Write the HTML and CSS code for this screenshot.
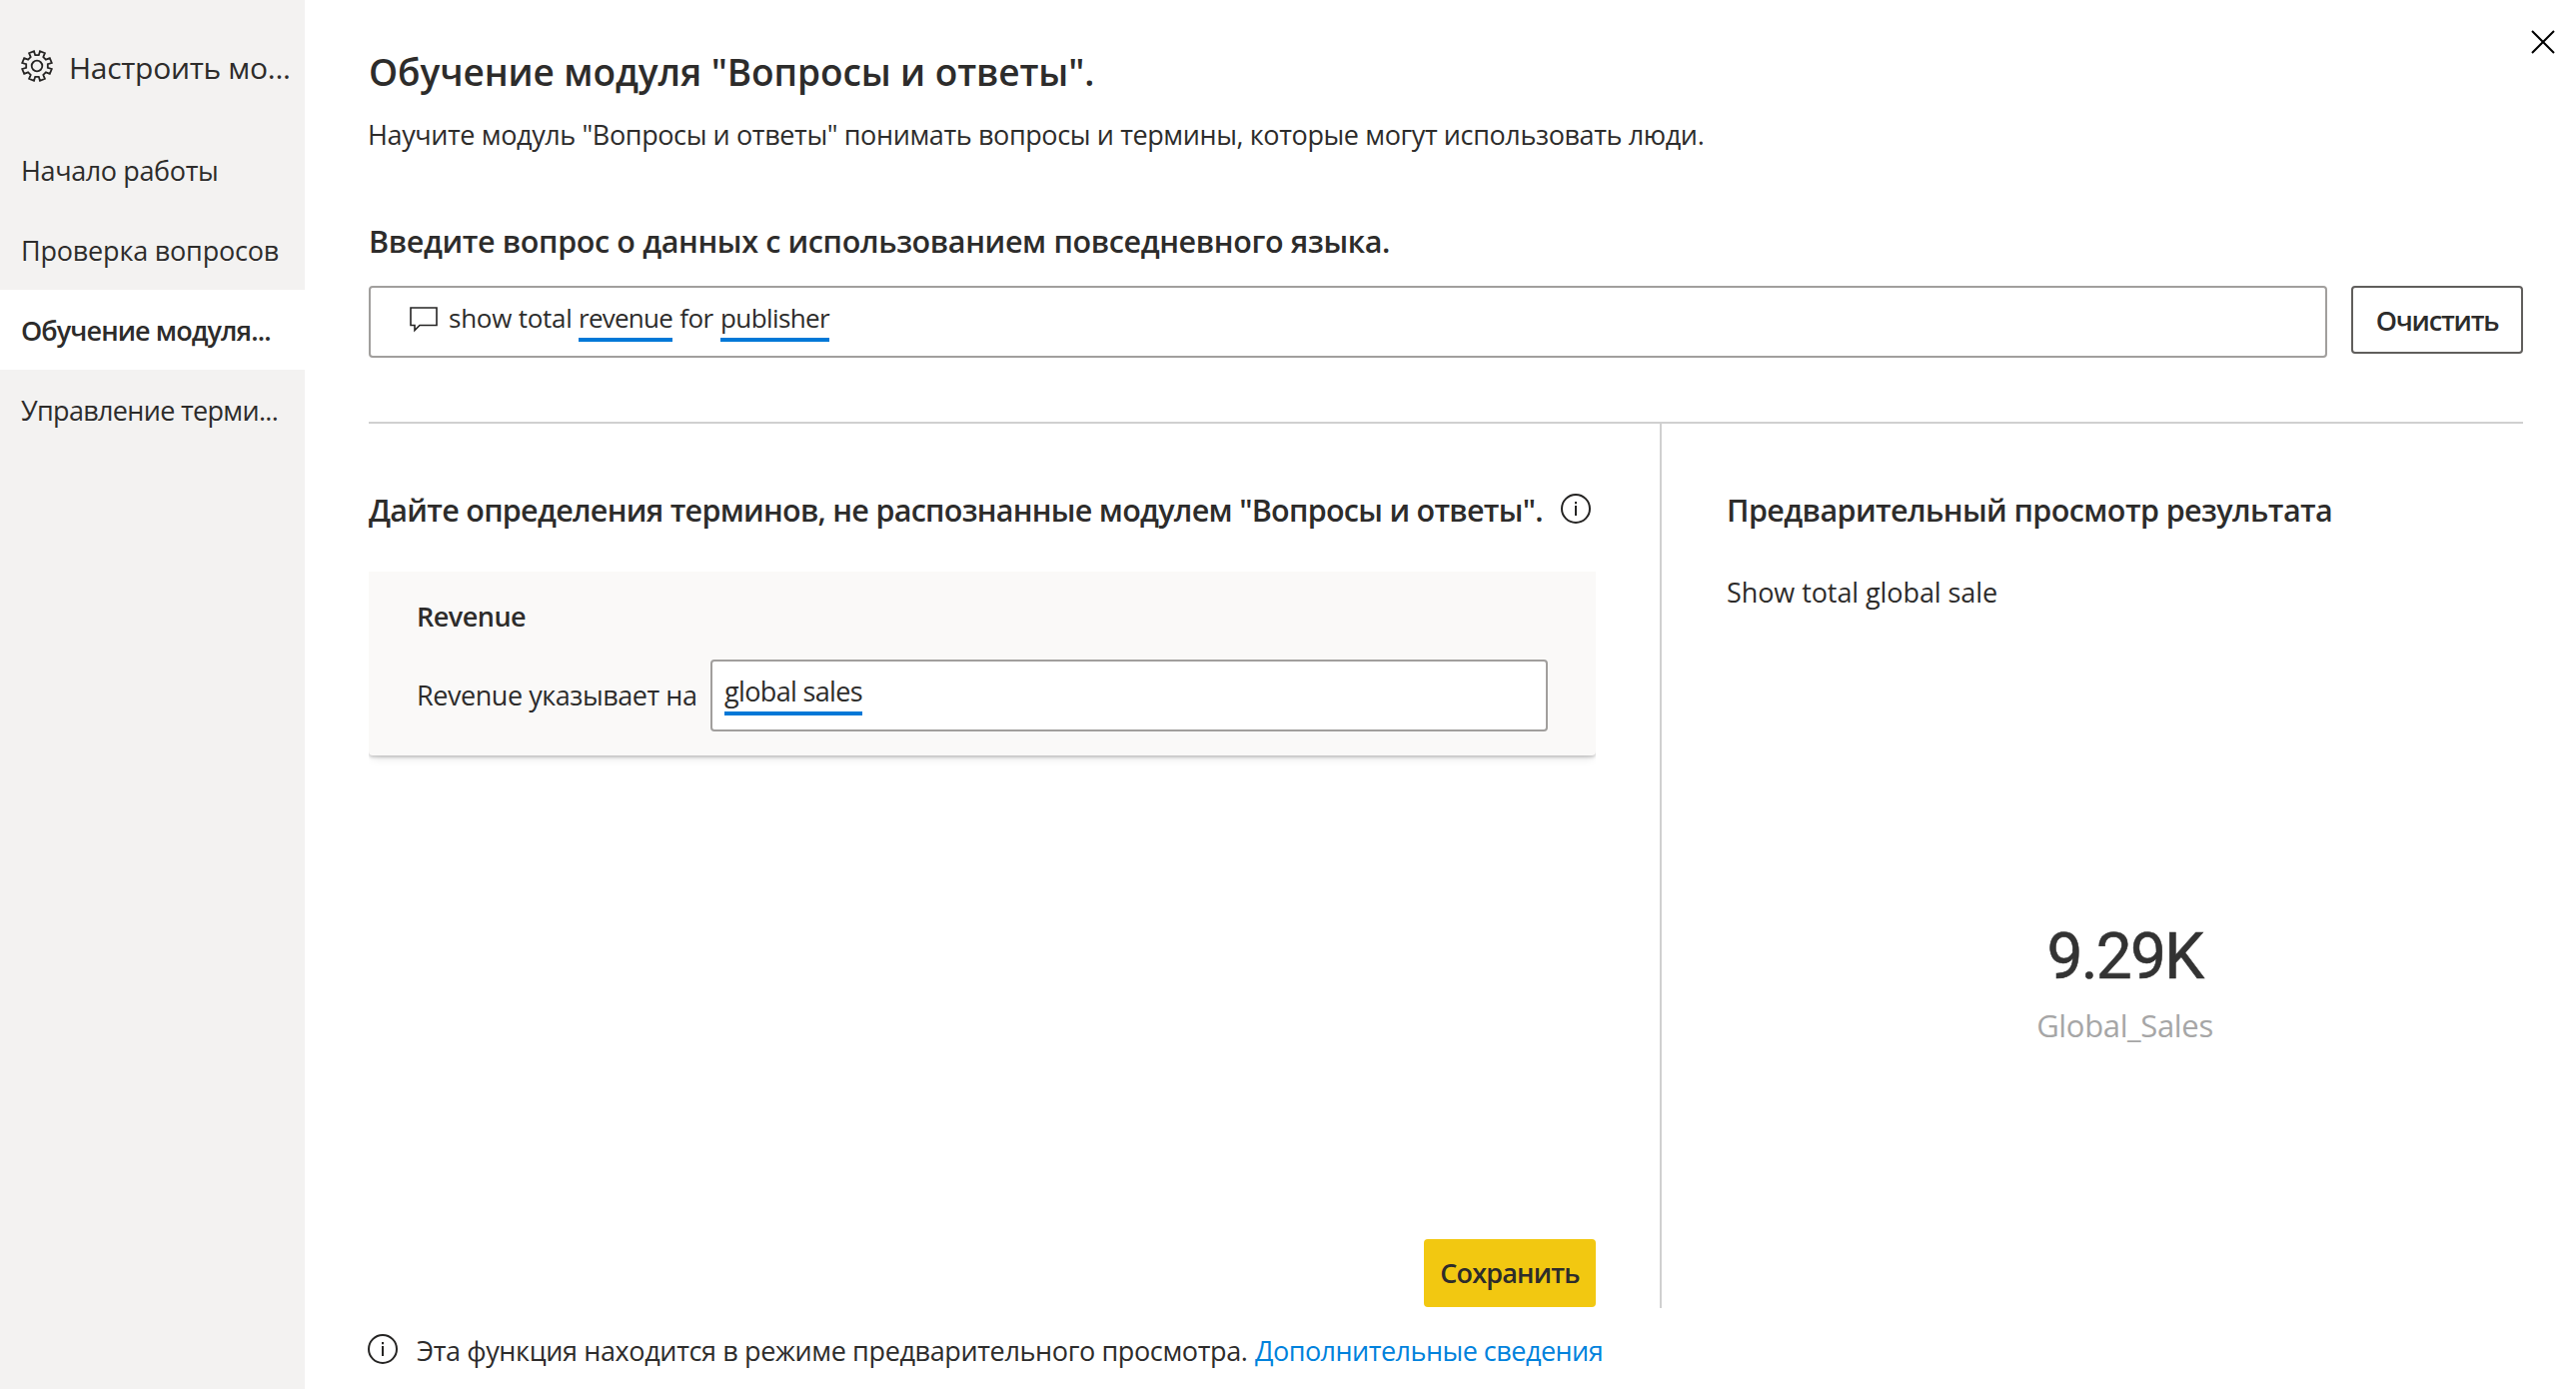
FILE: index.html
```html
<!DOCTYPE html>
<html lang="ru">
<head>
<meta charset="utf-8">
<title>Настройка модуля "Вопросы и ответы"</title>
<link rel="stylesheet" href="styles.css">
</head>
<body>
<div class="dialog">
  <aside class="sidebar">
    <header class="sidebar-head">
      <svg class="gear" viewBox="0 0 32 32"><path d="M13 1.2 L14.2 5.2 H17.8 L19 1.2 L23.9 3.2 L22.3 7.1 L24.9 9.7 L28.8 8.1 L30.8 13 L26.8 14.2 V17.8 L30.8 19 L28.8 23.9 L24.9 22.3 L22.3 24.9 L23.9 28.8 L19 30.8 L17.8 26.8 H14.2 L13 30.8 L8.1 28.8 L9.7 24.9 L7.1 22.3 L3.2 23.9 L1.2 19 L5.2 17.8 V14.2 L1.2 13 L3.2 8.1 L7.1 9.7 L9.7 7.1 L8.1 3.2 Z"/><circle cx="16" cy="16" r="5.3"/></svg>
      <span class="sidebar-title">Настроить мо...</span>
    </header>
    <nav class="nav">
      <a class="nav-item start">Начало работы</a>
      <a class="nav-item review">Проверка вопросов</a>
      <a class="nav-item active">Обучение модуля...</a>
      <a class="nav-item manage">Управление терми...</a>
    </nav>
  </aside>
  <main class="main">
    <svg class="close" viewBox="0 0 24 24"><path d="M1 1 L23 23 M23 1 L1 23"/></svg>
    <h1 class="title">Обучение модуля "Вопросы и ответы".</h1>
    <p class="subtitle">Научите модуль "Вопросы и ответы" понимать вопросы и термины, которые могут использовать люди.</p>
    <h2 class="heading ask">Введите вопрос о данных с использованием повседневного языка.</h2>
    <div class="query-row">
      <div class="field query">
        <svg class="chat" viewBox="0 0 28 26"><path d="M1 1 H27 V18.5 H10 L5 23.5 V18.5 H1 Z"/></svg>
        <span class="word lead">show total</span><span class="word term revenue">revenue</span><span class="word for">for</span><span class="word term publisher">publisher</span>
      </div>
      <button class="btn clear">Очистить</button>
    </div>
    <div class="columns">
      <section class="define">
        <div class="define-head">
          <h2 class="heading terms">Дайте определения терминов, не распознанные модулем "Вопросы и ответы".</h2>
          <svg class="info" viewBox="0 0 30 30"><circle cx="15" cy="15" r="14"/><path d="M15 12 V22 M15 8 V10.2"/></svg>
        </div>
        <div class="card">
          <h3 class="card-title">Revenue</h3>
          <div class="card-row">
            <label class="card-label">Revenue указывает на</label>
            <div class="field answer"><span class="word term sales">global sales</span></div>
          </div>
        </div>
        <button class="btn save">Сохранить</button>
      </section>
      <section class="preview">
        <h2 class="heading result">Предварительный просмотр результата</h2>
        <p class="restated">Show total global sale</p>
        <div class="kpi">
          <div class="kpi-value">9.29K</div>
          <div class="kpi-label">Global_Sales</div>
        </div>
      </section>
    </div>
    <footer class="footer">
      <svg class="info" viewBox="0 0 30 30"><circle cx="15" cy="15" r="14"/><path d="M15 12 V22 M15 8 V10.2"/></svg>
      <span class="notice">Эта функция находится в режиме предварительного просмотра.</span>
      <a class="link">Дополнительные сведения</a>
    </footer>
  </main>
</div>
</body>
</html>
```
FILE: styles.css
```css
* { box-sizing: border-box; }
body { margin: 0; background: #fff; color: #2d2c2b; font: 27px/40px "Open Sans", "Noto Sans", sans-serif; white-space: nowrap; }
h1, h2, h3, p { margin: 0; font-weight: 600; }
svg { fill: none; stroke: #252423; stroke-width: 2; flex: none; display: block; }

.dialog { display: flex; height: 1390px; overflow: hidden; }

.sidebar { width: 305px; flex: none; background: #f3f2f1; }
.sidebar-head { height: 130px; padding: 37px 0 0 21px; display: flex; align-items: flex-start; gap: 16px; }
.gear { width: 32px; height: 32px; margin-top: 13px; stroke-width: 1.8; }
.sidebar-title { font-size: 30px; line-height: 61px; letter-spacing: -0.3px; }
.nav { display: flex; flex-direction: column; }
.nav-item { height: 80px; line-height: 82px; padding-left: 21px; }
.start { letter-spacing: -0.38px; }
.review { letter-spacing: -0.2px; }
.active { background: #fff; font-weight: 600; letter-spacing: -0.92px; }
.manage { letter-spacing: -0.68px; }

.main { position: relative; flex: 1; display: flex; flex-direction: column; padding: 46px 53px 0 64px; }
.close { position: absolute; top: 30px; right: 21px; width: 24px; height: 24px; stroke: #000; }
.title { font-size: 37px; line-height: 52px; letter-spacing: -0.08px; }
.subtitle { margin: 17px 0 0 -1px; font-weight: 400; letter-spacing: -0.39px; }
.heading { font-size: 30.5px; line-height: 44px; }
.ask { margin-top: 64px; letter-spacing: -0.36px; }

.query-row { display: flex; gap: 24px; margin-top: 23px; align-items: flex-start; }
.field { height: 72px; border: 2px solid #a19f9d; border-radius: 4px; background: #fff; display: flex; align-items: flex-start; padding-top: 13px; }
.query { flex: 1; padding-left: 39px; font-size: 26px; }
.chat { width: 28px; height: 26px; margin: 6px 11px 0 0; stroke-width: 1.6; }
.word { line-height: 34px; }
.term { padding-bottom: 3px; border-bottom: 4px solid #0078d7; }
.lead { width: 130px; letter-spacing: -0.25px; }
.revenue { width: 94px; letter-spacing: -0.75px; }
.for { width: 48px; text-align: center; letter-spacing: -0.5px; }
.publisher { width: 109px; letter-spacing: -0.6px; }
.btn { height: 68px; padding: 0; border-radius: 4px; color: #2d2c2b; font: 600 27px/65px "Open Sans", "Noto Sans", sans-serif; text-align: center; }
.clear { width: 172px; border: 2px solid #605e5c; background: #fff; letter-spacing: -1.2px; }

.columns { display: flex; height: 887px; margin-top: 64px; border-top: 2px solid #d0d0d0; }
.define { width: 1294px; border-right: 2px solid #d0d0d0; padding: 64px 64px 0 0; display: flex; flex-direction: column; }
.define-head { display: flex; align-items: flex-start; justify-content: space-between; padding-right: 5px; }
.terms { letter-spacing: -0.72px; }
.info { width: 30px; height: 30px; }
.define-head .info { margin-top: 6px; }
.card { height: 184px; margin-top: 40px; padding: 25px 48px 0; background: #faf9f8; border-radius: 0 0 4px 4px; box-shadow: 0 2px 3px rgba(0, 0, 0, 0.18), 0 6px 10px -3px rgba(0, 0, 0, 0.1); clip-path: inset(0 0 -20px 0); }
.card-title { font-size: 27px; letter-spacing: -0.5px; }
.card-row { display: flex; align-items: center; margin-top: 23px; }
.card-label { width: 294px; letter-spacing: -0.45px; }
.answer { width: 838px; padding-left: 12px; }
.sales { width: 138px; letter-spacing: -0.65px; }
.save { width: 172px; margin-top: auto; margin-bottom: 1px; align-self: flex-end; border: 0; background: #f2c811; line-height: 68px; letter-spacing: -0.8px; }

.preview { flex: 1; padding: 64px 0 0 65px; }
.result { letter-spacing: -0.58px; }
.restated { margin-top: 41px; font-weight: 400; letter-spacing: -0.08px; }
.kpi { margin-top: 305px; text-align: center; }
.kpi-value { font: 400 64px/80px Roboto, sans-serif; color: #333; letter-spacing: -1.8px; -webkit-text-stroke: 0.6px #333; }
.kpi-label { margin-top: 8px; font-size: 31px; color: #a6a6a6; letter-spacing: -0.35px; }

.footer { display: flex; align-items: center; margin-top: 23px; }
.footer .info { margin: -4px 19px 0 -1px; }
.notice { width: 839px; letter-spacing: -0.37px; }
.link { color: #0082dc; letter-spacing: -0.52px; }
```
